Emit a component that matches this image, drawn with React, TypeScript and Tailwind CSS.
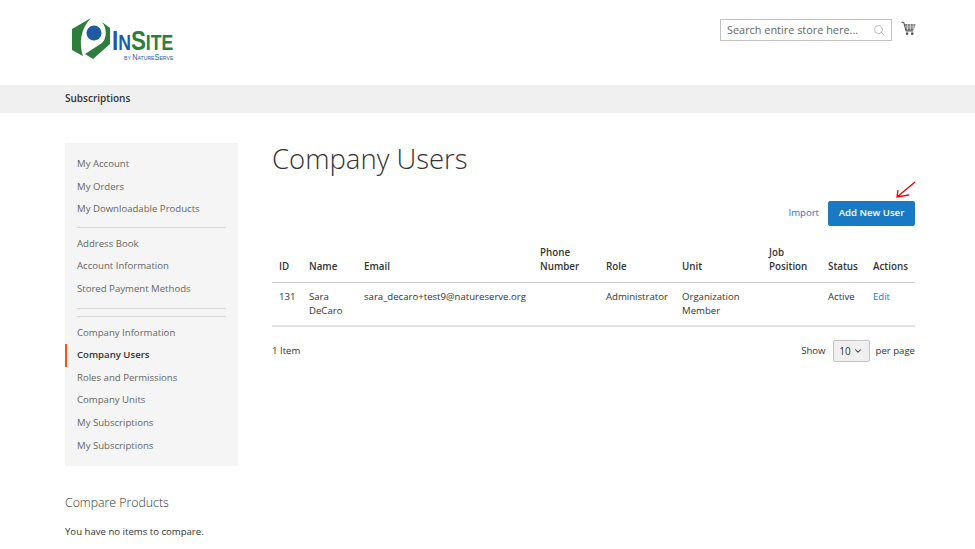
import { ChevronDown, Search } from "lucide-react"

const accountLinks = [
  ["My Account", "My Orders", "My Downloadable Products"],
  ["Address Book", "Account Information", "Stored Payment Methods"],
  ["Company Information", "Company Users", "Roles and Permissions", "Company Units", "My Subscriptions", "My Subscriptions"],
]

function Logo() {
  return (
    <svg width="106" height="48" viewBox="0 0 106 48" className="block">
      <path d="M20 2 L1 13 V34 L12 40 C8 28 9 13 20 2 Z" fill="#2f7d3c" />
      <path d="M31 6 L39 12 V28 L22 43 L14 38 L31 27 C36 22 36 12 31 6 Z" fill="#2f7d3c" />
      <circle cx="23" cy="17" r="7.5" fill="#1f5aa6" />
      <text transform="translate(41 33.5) scale(0.8 1)" fontFamily="Liberation Sans" fontWeight="700" fontSize="28" fill="#2f7d3c">
        <tspan fill="#1f5aa6">I</tspan>
        <tspan fill="#1f5aa6" fontSize="22">N</tspan>S<tspan fontSize="22">ITE</tspan>
      </text>
      <text transform="translate(53 44) scale(0.86 1)" fontFamily="Liberation Sans" fontSize="6" fill="#1f5aa6">
        BY <tspan fontSize="8.5">N</tspan>ATURE<tspan fontSize="8.5">S</tspan>ERVE
      </text>
    </svg>
  )
}

function CartIcon() {
  return (
    <svg width="15" height="15" viewBox="0 0 16 16" className="block">
      <path d="M0.5 1 L3 1.8 L5.5 10.5 L13 10.5" fill="none" stroke="#555" strokeWidth="1.2" />
      <path d="M4 3.5 L15.5 3.5 L13.5 9.5 L5.5 9.5 Z" fill="#666" />
      <path d="M4.5 5.5 H15 M5 7.5 H14.4 M7 3.5 V9.5 M10 3.5 V9.5 M13 3.5 V9.5" stroke="#fff" strokeWidth="0.6" />
      <circle cx="6.5" cy="13.5" r="1.4" fill="#555" />
      <circle cx="12" cy="13.5" r="1.4" fill="#555" />
    </svg>
  )
}

export default function App() {
  return (
    <div className="w-[975px] h-[549px] overflow-hidden bg-white text-[#333] text-[9.6px] font-['Open_Sans',sans-serif]">
      <header className="h-[85px] pl-[65px] pr-[60px] flex justify-between">
        <div className="pt-[16px] pl-[6px]">
          <Logo />
        </div>
        <div className="flex items-start pt-[19px]">
          <div className="w-[172px] h-[22px] border border-[#c2c2c2] pl-[6px] pr-[6px] flex items-center justify-between">
            <span className="text-[10.9px] text-[#666]">Search entire store here...</span>
            <Search size={12} className="text-[#bbb]" />
          </div>
          <div className="ml-[9px] mt-[2px] w-[14px]">
            <CartIcon />
          </div>
        </div>
      </header>

      <div className="h-[28px] bg-[#f0f0f0] px-[65px] pb-[1px] flex items-center font-semibold text-[10px] text-[#333]">Subscriptions</div>

      <div className="flex pl-[65px] pr-[60px] pt-[30px]">
        <aside className="w-[173px] shrink-0 mr-[34px]">
          <nav className="bg-[#f5f5f5] h-[323px] pt-[10px]">
            {accountLinks.map((group, i) => (
              <div key={i}>
                {i === 1 && <div className="mx-[12px] border-t border-[#d8d8d8] mt-[6px] mb-[5px]" />}
                {i === 2 && (
                  <>
                    <div className="mx-[12px] border-t border-[#d8d8d8] mt-[7px]" />
                    <div className="mx-[12px] border-t border-[#d8d8d8] mt-[7px] mb-[5px]" />
                  </>
                )}
                {group.map((label, j) => {
                  const active = label === "Company Users"
                  return (
                    <div
                      key={j}
                      className={`h-[22.6px] flex items-center ${active ? "border-l-2 border-[#ff5501] pl-[10px] font-semibold text-[#333]" : "pl-[12px] text-[#666]"}`}
                    >
                      {label}
                    </div>
                  )
                })}
              </div>
            ))}
          </nav>
          <h2 className="mt-[28px] text-[12.3px] font-light text-[#333] leading-[18px]">Compare Products</h2>
          <p className="mt-[13px] leading-[14px]">You have no items to compare.</p>
        </aside>

        <main className="w-[643px] shrink-0">
          <h1 className="text-[27.5px] font-light leading-[32px] text-[#333]">Company Users</h1>
          <div className="flex justify-end items-center gap-[9px] mt-[26px]">
            <a className="text-[#1979c3]">Import</a>
            <div className="relative">
              <button className="w-[87px] h-[25px] rounded-[2px] bg-[#1979c3] border border-[#1979c3] text-white font-semibold text-[9.6px]">Add New User</button>
              <svg width="22" height="20" viewBox="0 0 22 20" className="absolute right-[-1px] top-[-21px]">
                <path d="M21 2 L3 17 M4 10 L3 17 L15 15" fill="none" stroke="#f00000" strokeWidth="1.3" />
              </svg>
            </div>
          </div>

          <table className="w-full table-fixed mt-[20px] border-collapse">
            <colgroup>
              <col className="w-[30px]" />
              <col className="w-[55px]" />
              <col className="w-[176px]" />
              <col className="w-[66px]" />
              <col className="w-[76px]" />
              <col className="w-[87px]" />
              <col className="w-[59px]" />
              <col className="w-[45px]" />
              <col className="w-[49px]" />
            </colgroup>
            <thead>
              <tr className="border-b border-[#ccc] text-left">
                {["ID", "Name", "Email", "Phone Number", "Role", "Unit", "Job Position", "Status", "Actions"].map((h) => (
                  <th key={h} className="align-bottom pl-[7px] pb-[8px] font-semibold text-[9.8px] leading-[14px]">{h}</th>
                ))}
              </tr>
            </thead>
            <tbody>
              <tr className="border-b-2 border-[#e3e3e3] align-top leading-[14px]">
                <td className="pl-[7px] py-[7px]">131</td>
                <td className="pl-[7px] py-[7px]">Sara DeCaro</td>
                <td className="pl-[7px] py-[7px] whitespace-nowrap">sara_decaro+test9@natureserve.org</td>
                <td />
                <td className="pl-[7px] py-[7px]">Administrator</td>
                <td className="pl-[7px] py-[7px]">Organization Member</td>
                <td />
                <td className="pl-[7px] py-[7px]">Active</td>
                <td className="pl-[7px] py-[7px] text-[#1979c3]">Edit</td>
              </tr>
            </tbody>
          </table>

          <div className="flex justify-between items-center mt-[13px]">
            <span>1 Item</span>
            <div className="flex items-center">
              <span>Show</span>
              <div className="ml-[7px] mr-[6px] w-[37px] h-[22px] bg-[#f0f0f0] border border-[#c2c2c2] rounded-[2px] flex items-center justify-center gap-[2px] text-[10px]">
                10 <ChevronDown size={10} strokeWidth={2.5} />
              </div>
              <span>per page</span>
            </div>
          </div>
        </main>
      </div>
    </div>
  )
}
